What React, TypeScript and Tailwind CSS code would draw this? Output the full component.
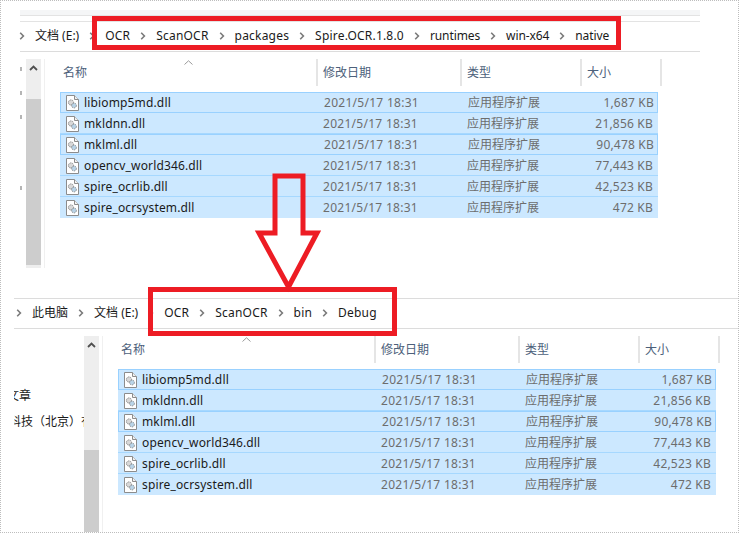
import React from "react";

const files = [
  { name: "libiomp5md.dll", size: "1,687 KB", boxed: true },
  { name: "mkldnn.dll", size: "21,856 KB" },
  { name: "mklml.dll", size: "90,478 KB", boxed: true },
  { name: "opencv_world346.dll", size: "77,443 KB" },
  { name: "spire_ocrlib.dll", size: "42,523 KB" },
  { name: "spire_ocrsystem.dll", size: "472 KB", last: true },
];

const crumbTracking: Record<string, string> = {
  "此电脑": "tracking-normal",
  "文档 (E:)": "tracking-normal",
  runtimes: "tracking-[-0.1px]",
  "win-x64": "tracking-[-0.1px]",
  native: "tracking-[-0.1px]",
};

function Chevron() {
  return (
    <svg width="6" height="8" viewBox="0 0 6 8" className="mx-[10px] shrink-0">
      <path d="M1.2 0.8 L4.4 4 L1.2 7.2" fill="none" stroke="#7a7a7a" strokeWidth="1.6" />
    </svg>
  );
}

function Crumbs({ items, className }: { items: string[]; className: string }) {
  return (
    <div className={`flex items-center h-full pb-[2px] text-[12px] text-[#1a1a1a] ${className}`}>
      {items.map((item) => (
        <React.Fragment key={item}>
          <Chevron />
          <span className={`whitespace-nowrap ${crumbTracking[item] ?? "tracking-[0.2px]"}`}>{item}</span>
        </React.Fragment>
      ))}
    </div>
  );
}

function DllIcon() {
  return (
    <svg width="13" height="16" viewBox="0 0 13 16" className="shrink-0">
      <path d="M0.5 0.5 H8.5 L12.5 4.5 V15.5 H0.5 Z" fill="#fff" stroke="#8c8c8c" />
      <path d="M8.5 0.5 V4.5 H12.5" fill="#f0f0f0" stroke="#8c8c8c" />
      <circle cx="5" cy="7.5" r="2.6" fill="#d8d8d8" stroke="#8a8a8a" strokeDasharray="1.4 0.8" />
      <circle cx="8" cy="10.5" r="2.4" fill="#b9d4e8" stroke="#8a8a8a" strokeDasharray="1.4 0.8" />
    </svg>
  );
}

function FileTable() {
  return (
    <div className="relative pl-[15px] border-l border-[#f0f0f0]">
      <div className="flex h-[27px] text-[12px] text-[#4c607a]">
        <div className="w-[258px] pl-[3px] pt-[5px] border-r-2 border-[#e5e5e5]">名称</div>
        <div className="w-[144px] pl-[5px] pt-[5px] border-r-2 border-[#e5e5e5]">修改日期</div>
        <div className="w-[120px] pl-[5px] pt-[5px] border-r-2 border-[#e5e5e5]">类型</div>
        <div className="w-[80px] pl-[5px] pt-[5px] border-r-2 border-[#e5e5e5]">大小</div>
      </div>
      <svg width="9" height="5" viewBox="0 0 9 5" className="absolute left-[139px] top-[1px]">
        <path d="M0.5 4.5 L4.5 0.8 L8.5 4.5" fill="none" stroke="#9a9a9a" />
      </svg>
      <div className="mt-[6px] w-[598px] text-[12px]">
        {files.map((f) => (
          <div
            key={f.name}
            className={`flex items-center h-[21px] bg-[#cce8ff] ${
              f.boxed
                ? "border border-[#99d1ff]"
                : f.last
                  ? ""
                  : "border-t border-t-transparent border-b border-b-[#a6d8ff]"
            }`}
          >
            <div className={`flex items-center gap-[5px] w-[263px] ${f.boxed ? "pl-[5px]" : "pl-[6px]"}`}>
              <DllIcon />
              <span className="tracking-[0.15px] text-[#1a1a1a]">{f.name}</span>
            </div>
            <div className="w-[144px] tracking-[0.28px] text-[#6d6d6d]">2021/5/17 18:31</div>
            <div className="w-[101px] text-[#6d6d6d]">应用程序扩展</div>
            <div className="w-[86px] pr-[1px] text-right tracking-[0.2px] text-[#6d6d6d]">{f.size}</div>
          </div>
        ))}
      </div>
    </div>
  );
}

function ScrollBar({ trackTop, thumbHeight }: { trackTop: string; thumbHeight: string }) {
  return (
    <div className="flex flex-col w-[15px] h-full bg-[#eeeeee]">
      <div className="flex items-center justify-center h-[18px]">
        <svg width="9" height="6" viewBox="0 0 9 6">
          <path d="M1 5 L4.5 1.5 L8 5" fill="none" stroke="#505050" strokeWidth="1.8" />
        </svg>
      </div>
      <div className={`shrink-0 ${trackTop}`} />
      <div className={`bg-[#cdcdcd] ${thumbHeight}`} />
    </div>
  );
}

export default function App() {
  return (
    <div className="relative w-[739px] h-[533px] overflow-hidden bg-white font-['Noto_Sans','Noto_Sans_CJK_SC',sans-serif] border border-dotted border-[#bdbdbd]">
      {/* upper explorer window */}
      <div className="ml-[19px] w-[680px] pt-[9px]">
        <div className="h-[5px] bg-[#f5f6f7]" />
        <div className="h-[7px] border-y border-[#e3e3e3]" />
        <div className="h-[30px] border-b border-[#dcdcdc]">
          <Crumbs
            className="-ml-[11px]"
            items={["文档 (E:)", "OCR", "ScanOCR", "packages", "Spire.OCR.1.8.0", "runtimes", "win-x64", "native"]}
          />
        </div>
        <div className="flex h-[209px] mt-[7px]">
          <div className="w-[6px] flex flex-col gap-[20px] pt-[8px]">
            <span className="block w-[2px] h-[4px] bg-[#b5b5b5]" />
            <span className="block w-[2px] h-[4px] bg-[#b5b5b5]" />
            <span className="block w-[2px] h-[4px] bg-[#b5b5b5]" />
            <span className="block w-[2px] h-[4px] mt-[47px] bg-[#b5b5b5]" />
          </div>
          <ScrollBar trackTop="h-[22px]" thumbHeight="h-[166px]" />
          <div className="w-[3px]" />
          <FileTable />
        </div>
      </div>

      {/* lower explorer window */}
      <div className="ml-[13px] mt-[30px] border-t border-[#dcdcdc]">
        <div className="h-[30px] border-b border-[#dcdcdc]">
          <Crumbs className="-ml-[8px]" items={["此电脑", "文档 (E:)", "OCR", "ScanOCR", "bin", "Debug"]} />
        </div>
        <div className="flex h-[197px] mt-[7px]">
          <div className="w-[70px] overflow-hidden text-[12px] text-[#1a1a1a] whitespace-nowrap">
            <div className="mt-[51px] -ml-[7px]">文章</div>
            <div className="mt-[8px] -ml-[5px]">科技（北京）有限公司</div>
          </div>
          <ScrollBar trackTop="h-[96px]" thumbHeight="h-[83px]" />
          <div className="w-[3px]" />
          <FileTable />
        </div>
      </div>

      {/* red annotations */}
      <div className="absolute left-[91px] top-[15px] w-[529px] h-[34px] border-[5px] border-[#ed1c24]" />
      <div className="absolute left-[147px] top-[286px] w-[249px] h-[49px] border-[5px] border-[#ed1c24]" />
      <svg width="70" height="122" viewBox="0 0 70 122" className="absolute left-[253px] top-[170px]">
        <path d="M21 5 H49 V62 H63 L34.5 116 L5 62 H21 Z" fill="none" stroke="#ed1c24" strokeWidth="5" />
      </svg>
    </div>
  );
}
